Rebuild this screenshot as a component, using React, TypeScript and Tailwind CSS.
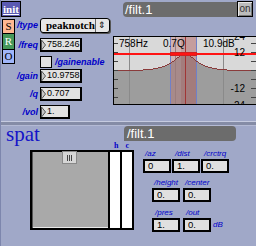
import React from "react";

const lbl = "font-['Liberation_Sans',sans-serif] italic font-bold text-[9px] leading-none text-[#0000c8]";
const small = "font-['Liberation_Sans',sans-serif] italic text-[8px] leading-none text-[#0000c8]";

function NumBox({ value, w }: { value: string; w: string }) {
  return (
    <div
      className={`${w} h-[14px] bg-[#e2e2e2] border-t border-l border-r-2 border-b-2 border-black flex items-center font-['Liberation_Sans',sans-serif] text-[9px] leading-none text-black`}
    >
      <svg width="5" height="12" viewBox="0 0 5 12" className="shrink-0">
        <path d="M0.5 1 L4.5 6 L0.5 11 Z" fill="#c8c8c8" stroke="#555" strokeWidth="1" />
      </svg>
      <span className="ml-[1px]">{value}</span>
    </div>
  );
}

function SmallBox({ value }: { value: string }) {
  return (
    <div className="w-[28px] h-[14px] bg-[#e0e0e0] border-2 border-black flex items-center pl-[3px] font-['Liberation_Sans',sans-serif] text-[9.5px] leading-none text-black">
      {value}
    </div>
  );
}

function Graph() {
  const pts: string[] = [];
  for (let x = 0; x <= 142; x++) {
    const d = x - 71;
    const g = Math.max(0, 16 / (1 + (d / 14) ** 2) - 1.2) * (16 / 14.8);
    pts.push(`${x},${33 - Math.round(g)}`);
  }
  const line = pts.join(" ");
  const fill = `0,67 ${line} 142,67`;
  const ticks = [-3, 6, 15, 24, 33, 42, 51, 60, 69];

  return (
    <div className="w-[143px] h-[69px] border-l border-y border-black bg-[#d9d9d9] shrink-0">
      <svg width="142" height="67" viewBox="0 0 142 67" shapeRendering="crispEdges">
        <polygon points={fill} fill="#9d9d9d" />
        <line x1="15.5" y1="0" x2="15.5" y2="67" stroke="#8a8a8a" />
        <line x1="61.5" y1="0" x2="61.5" y2="67" stroke="#8a8a8a" />
        <line x1="109.5" y1="0" x2="109.5" y2="67" stroke="#8a8a8a" />
        <rect x="56" y="0" width="26" height="67" fill="rgba(190,100,100,0.32)" />
        <rect x="67" y="0" width="15" height="67" fill="rgba(150,60,60,0.18)" />
        <line x1="56.5" y1="0" x2="56.5" y2="67" stroke="#7080c8" />
        <line x1="82.5" y1="0" x2="82.5" y2="67" stroke="#7080c8" />
        <line x1="71.5" y1="0" x2="71.5" y2="67" stroke="#a03535" />
        <polyline points={line} fill="none" stroke="#8a3b3b" strokeWidth="1" />
        <rect x="0" y="16" width="142" height="2" fill="#ff1414" />
        <rect x="56.5" y="15.5" width="26" height="3" fill="none" stroke="#d02020" />
        {ticks.map((y) => (
          <g key={y}>
            <line x1="0" y1={y + 0.5} x2="4" y2={y + 0.5} stroke="#444" />
            <line x1="137" y1={y + 0.5} x2="142" y2={y + 0.5} stroke="#444" />
          </g>
        ))}
        <g fontFamily="Liberation Sans, sans-serif" fontSize="10" fill="#000">
          <text x="5" y="10">758Hz</text>
          <text x="49" y="10">0.7Q</text>
          <text x="89" y="10">10.9dB</text>
          <text x="131" y="3" textAnchor="end">24</text>
          <text x="131" y="19" textAnchor="end">12</text>
          <text x="131" y="55" textAnchor="end">-12</text>
          <text x="131" y="72" textAnchor="end">-24</text>
        </g>
      </svg>
    </div>
  );
}

export default function App() {
  return (
    <div className="w-[256px] h-[246px] overflow-hidden bg-[#a0a8c8] border-l border-[#7d86ad] font-['Liberation_Sans',sans-serif]">
      {/* top panel */}
      <div className="h-[121px] flex flex-col">
        <div className="h-[18px] flex items-start">
          <div className="mt-[1px] w-[20px] h-[16px] bg-[#5a5ab2] border border-black flex items-center justify-center font-['Liberation_Serif',serif] font-bold text-[11px] leading-none text-white underline">
            init
          </div>
          <div className="ml-[102px] mt-[2px] w-[114px] h-[15px] bg-[#6c6c6c] rounded-l-[4px] flex items-center pl-[2px] text-[13px] leading-none text-white">
            /filt.1
          </div>
          <div className="mt-[1px] w-[16px] h-[16px] bg-[#bcbcbc] border border-black shadow-[inset_1px_1px_0_#e8e8e8,inset_-1px_-1px_0_#777] flex items-center justify-center text-[10px] leading-none text-[#333]">
            on
          </div>
        </div>

        <div className="flex">
          <div className="ml-[1px] mt-[1px] w-[13px] flex flex-col font-['Liberation_Serif',serif] text-[11px] leading-none">
            <div className="h-[15px] bg-[#ffb892] border border-black flex items-center justify-center text-black">S</div>
            <div className="h-[15px] bg-[#46985a] border-x border-black flex items-center justify-center text-white">R</div>
            <div className="h-[15px] bg-[#a0b6fa] border border-black flex items-center justify-center text-black">O</div>
          </div>

          <div className="w-[98px] flex flex-col">
            <div className="flex items-center h-[15px]">
              <div className={`w-[25px] text-right pr-[2px] ${lbl}`}>/type</div>
              <div className="w-[70px] h-[15px] rounded-[3px] bg-[#e6e6e6] border border-black shadow-[1px_1px_0_#555] flex items-center">
                <span className="flex-1 pl-[5px] font-['Liberation_Serif',serif] font-bold text-[11px] leading-none text-black">peaknotch</span>
                <span className="w-[16px] h-full border-l border-[#666] flex items-center justify-center text-[9px] leading-none text-black">⇕</span>
              </div>
            </div>
            <div className="flex items-center mt-[5px]">
              <div className={`w-[25px] text-right pr-[2px] ${lbl}`}>/freq</div>
              <NumBox value="758.246" w="w-[42px]" />
            </div>
            <div className="flex items-center mt-[4px] h-[12px]">
              <div className="ml-[25px] w-[12px] h-[12px] bg-[#e2e2e2] border border-black" />
              <div className={`ml-[3px] ${lbl}`}>/gainenable</div>
            </div>
            <div className="flex items-center mt-[1px]">
              <div className={`w-[25px] text-right pr-[2px] ${lbl}`}>/gain</div>
              <NumBox value="10.9758" w="w-[42px]" />
            </div>
            <div className="flex items-center mt-[4px]">
              <div className={`w-[25px] text-right pr-[2px] ${lbl}`}>/q</div>
              <NumBox value="0.707" w="w-[42px]" />
            </div>
            <div className="flex items-center mt-[4px]">
              <div className={`w-[25px] text-right pr-[2px] ${lbl}`}>/vol</div>
              <NumBox value="1." w="w-[30px]" />
            </div>
          </div>

          <div className="ml-[1px] mt-[18px]">
            <Graph />
          </div>
        </div>
      </div>

      {/* separator */}
      <div className="h-[1px] bg-[#c6cbe0]" />
      <div className="h-[3px] bg-[#858ca6]" />
      <div className="h-[1px] bg-[#b4bad4]" />

      {/* bottom panel */}
      <div className="flex items-start h-[16px]">
        <div className="ml-[5px] w-[117px] font-['Liberation_Serif',serif] text-[21px] leading-[16px] text-[#1414c8]">spat</div>
        <div className="ml-[1px] w-[112px] h-[15px] bg-[#6c6c6c] rounded-r-[4px] rounded-tl-[4px] flex items-center pl-[3px] text-[13px] leading-none text-white">
          /filt.1
        </div>
      </div>

      <div className="flex">
        <div className="ml-[29px] flex flex-col">
          <div className="h-[8px] flex items-end font-['Liberation_Serif',serif] font-bold text-[8px] leading-none text-[#0000c8]">
            <span className="ml-[84px]">h</span>
            <span className="ml-[7px]">c</span>
          </div>
          <div className="flex h-[80px]">
            <div className="relative w-[80px] h-[80px] border-2 border-black bg-[#a9a9a9] shadow-[inset_1px_0_0_#555,inset_0_-1px_0_#e8e8e8]">
              <div className="absolute left-[30px] top-[-1px] w-[15px] h-[13px] bg-[#d6d6d6] border border-[#888] flex items-center justify-center gap-[1px]">
                <div className="w-[1px] h-[6px] bg-[#444]" />
                <div className="w-[1px] h-[6px] bg-[#444]" />
                <div className="w-[1px] h-[6px] bg-[#444]" />
              </div>
            </div>
            <div className="w-[12px] h-[80px] bg-white border-y-2 border-r-2 border-black" />
            <div className="w-[12px] h-[80px] bg-white border-y-2 border-r-2 border-black" />
          </div>
        </div>

        <div className="ml-[9px] flex flex-col">
          <div className="flex gap-[1px] mt-[8px] h-[8px]">
            <div className={`w-[28px] pl-[2px] ${small}`}>/az</div>
            <div className={`w-[28px] pl-[3px] ${small}`}>/dist</div>
            <div className={`w-[28px] pl-[3px] ${small}`}>/crctrq</div>
          </div>
          <div className="flex gap-[1px] mt-[1px]">
            <SmallBox value="0" />
            <SmallBox value="1." />
            <SmallBox value="0." />
          </div>
          <div className="flex gap-[3px] ml-[9px] mt-[6px] h-[8px]">
            <div className={`w-[28px] pl-[2px] ${small}`}>/height</div>
            <div className={`w-[28px] pl-[2px] ${small}`}>/center</div>
          </div>
          <div className="flex gap-[3px] ml-[9px] mt-[1px]">
            <SmallBox value="0." />
            <SmallBox value="0." />
          </div>
          <div className="flex gap-[3px] ml-[9px] mt-[7px] h-[8px]">
            <div className={`w-[28px] pl-[3px] ${small}`}>/pres</div>
            <div className={`w-[28px] pl-[3px] ${small}`}>/out</div>
          </div>
          <div className="flex items-center gap-[3px] ml-[9px] mt-[1px]">
            <SmallBox value="1." />
            <SmallBox value="0." />
            <span className={`ml-[-1px] ${small}`}>dB</span>
          </div>
        </div>
      </div>
    </div>
  );
}
